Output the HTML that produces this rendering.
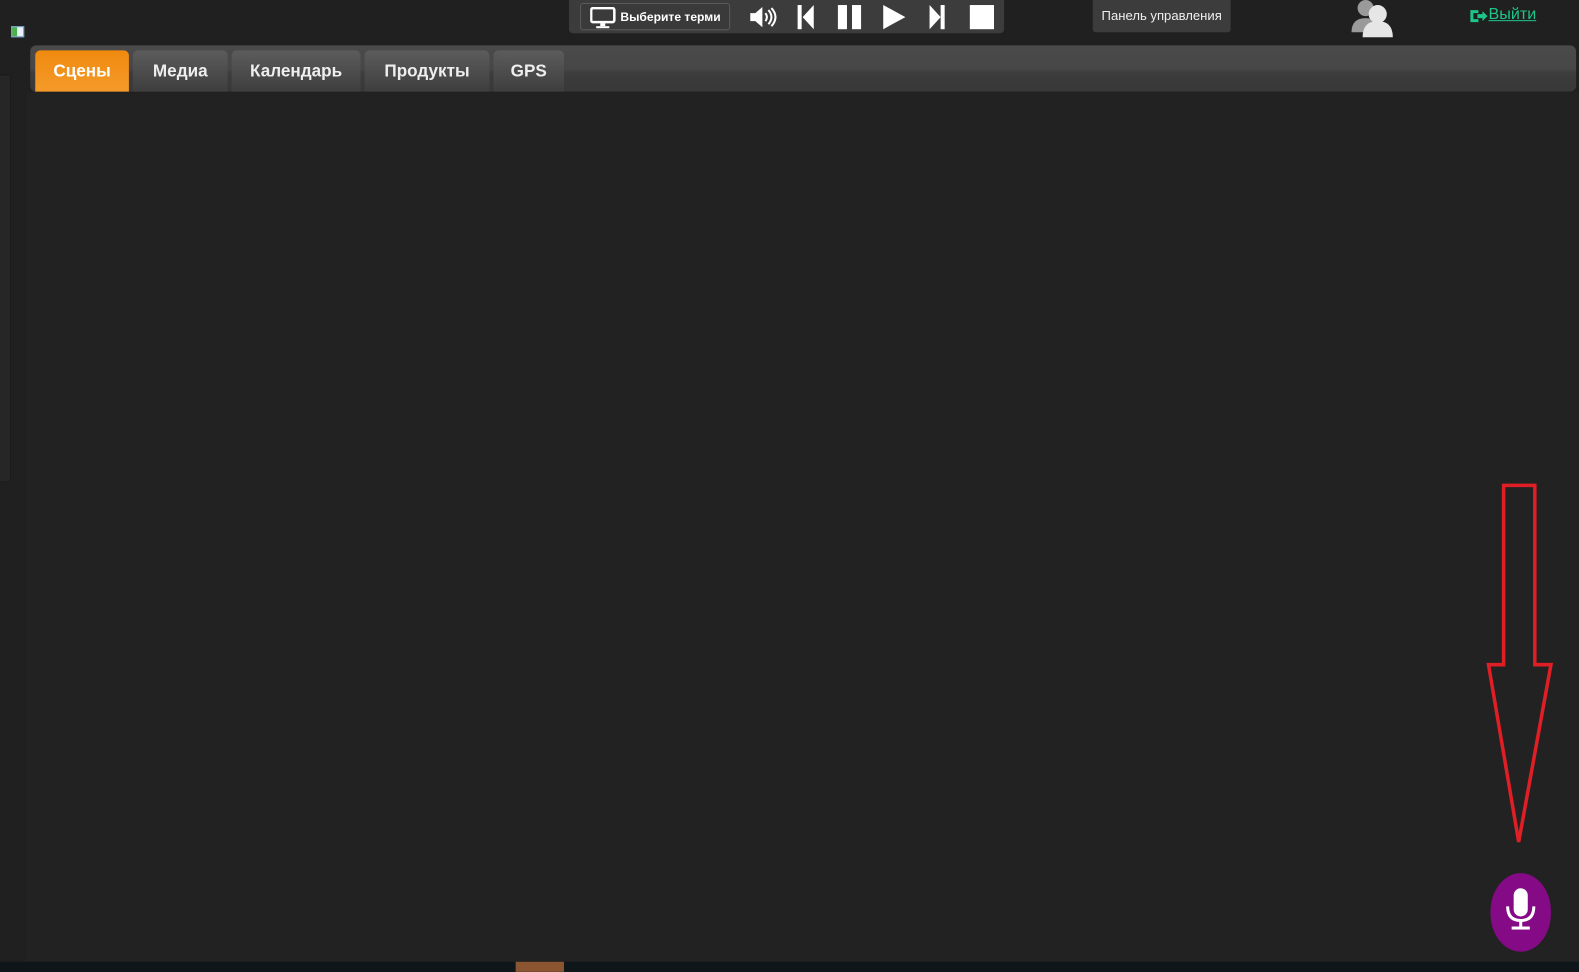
<!DOCTYPE html>
<html><head><meta charset="utf-8"><style>
*{margin:0;padding:0;box-sizing:border-box}
body{width:1579px;height:965px;background:#202020;overflow:hidden;position:relative;font-family:"Liberation Sans",sans-serif}
#w{position:absolute;left:0;top:0;width:1568px;height:958px;transform:scale(1.0071);transform-origin:0 0}
.abs{position:absolute}
.tab{position:absolute;top:50px;height:41px;border-radius:5px 5px 0 0;background:linear-gradient(#5c5c5c,#4a4a4a 60%,#3e3e3e);color:#eee;font-weight:bold;font-size:17px;text-align:center;line-height:42px;font-family:"Liberation Sans",sans-serif}
</style></head><body><div id="w">
<div class="abs" style="left:0;top:74px;width:11px;height:405px;background:#262626;border:1px solid #1a1a1a;border-left:none;border-radius:0 3px 3px 0"></div>
<div class="abs" style="left:27px;top:92px;width:1541px;height:863px;background:#222"></div>
<div class="abs" style="left:0;top:955px;width:1568px;height:10px;background:#0f161a"></div>
<div class="abs" style="left:512px;top:955px;width:48px;height:10px;background:#8a5530"></div>
<div class="abs" style="left:11px;top:26px;width:13px;height:11px;background:#e8f0f8;border:1px solid #6a9ac8"><div style="width:5px;height:9px;background:#4caf50"></div></div>
<div class="abs" style="left:30px;top:45px;width:1535px;height:46px;border-radius:6px;background:linear-gradient(#4a4a4a,#474747 50%,#3c3c3c 60%,#383838)"></div>
<div class="tab" style="left:35px;width:93px;background:linear-gradient(#f08a0e,#f49a2a);color:#fff">Сцены</div>
<div class="tab" style="left:132px;width:94px">Медиа</div>
<div class="tab" style="left:230px;width:128px">Календарь</div>
<div class="tab" style="left:362px;width:124px">Продукты</div>
<div class="tab" style="left:490px;width:70px">GPS</div>
<div class="abs" style="left:565px;top:0;width:432px;height:33px;background:#3c3c3c;border-radius:0 0 4px 4px"></div>
<div class="abs" style="left:576px;top:3px;width:149px;height:27px;border:1px solid #5a5a5a;border-radius:3px;background:#3a3a3a;color:#fff;font-size:12px;font-weight:bold;line-height:26px;padding-left:39px">Выберите терми</div>
<svg class="abs" style="left:586px;top:7px" width="26" height="22"><rect x="1" y="1" width="23" height="14" rx="2" fill="none" stroke="#fff" stroke-width="2.5"/><rect x="10" y="16" width="5" height="3" fill="#fff"/><rect x="6" y="19" width="13" height="2" fill="#fff"/></svg>
<svg class="abs" style="left:743px;top:5px" width="28" height="24"><path d="M2 8h5l7-6v20l-7-6H2z" fill="#fff"/><path d="M17 8q3 4 0 8M20 5q6 7 0 14M23 3q8 9 0 18" stroke="#fff" stroke-width="2" fill="none"/></svg>
<svg class="abs" style="left:790px;top:4px" width="20" height="26"><rect x="2" y="1" width="4" height="24" fill="#fff"/><path d="M18 1v24L7 13z" fill="#fff"/></svg>
<svg class="abs" style="left:831px;top:4px" width="26" height="26"><rect x="1" y="1" width="9" height="24" fill="#fff"/><rect x="15" y="1" width="9" height="24" fill="#fff"/></svg>
<svg class="abs" style="left:875px;top:4px" width="26" height="26"><path d="M2 1l22 12L2 25z" fill="#fff"/></svg>
<svg class="abs" style="left:921px;top:4px" width="20" height="26"><path d="M2 1v24l11-12z" fill="#fff"/><rect x="13" y="1" width="4" height="24" fill="#fff"/></svg>
<div class="abs" style="left:963px;top:5px;width:24px;height:24px;background:#fff"></div>
<div class="abs" style="left:1085px;top:0;width:137px;height:32px;background:#3c3c3c;border-radius:0 0 3px 3px;color:#eee;font-size:13px;line-height:32px;text-align:center">Панель управления</div>
<svg class="abs" style="left:1340px;top:0" width="48" height="38"><circle cx="16" cy="8" r="8" fill="#9a9a9a"/><path d="M2 32q0-14 14-14t14 14z" fill="#9a9a9a"/><circle cx="28" cy="14" r="9" fill="#e6e6e6"/><path d="M13 37q0-16 15-16t15 16z" fill="#e6e6e6"/></svg>
<svg class="abs" style="left:1458px;top:8px" width="20" height="16"><path d="M2 2h8v3H5v6h5v3H2z" fill="#1ec58a"/><path d="M9 6h5V3l5 5-5 5v-3H9z" fill="#1ec58a"/></svg>
<div class="abs" style="left:1478px;top:6px;color:#1ec58a;font-size:16px;text-decoration:underline">Выйти</div>
<svg class="abs" style="left:0;top:0" width="1568" height="958"><path d="M1493 482H1524V660H1540L1508 836L1478 660H1493Z" fill="none" stroke="#e01e25" stroke-width="3.5"/></svg>
<div class="abs" style="left:1480px;top:867px;width:60px;height:78px;border-radius:30px/38px;background:#840b85"></div>
<svg class="abs" style="left:1490px;top:880px" width="40" height="50"><rect x="13" y="2" width="14" height="28" rx="7" fill="#fff"/><path d="M7 20q0 14 13 14t13-14" fill="none" stroke="#fff" stroke-width="3"/><rect x="18.5" y="34" width="3" height="7" fill="#fff"/><rect x="11" y="40" width="18" height="3" fill="#fff"/></svg>
</div></body></html>
